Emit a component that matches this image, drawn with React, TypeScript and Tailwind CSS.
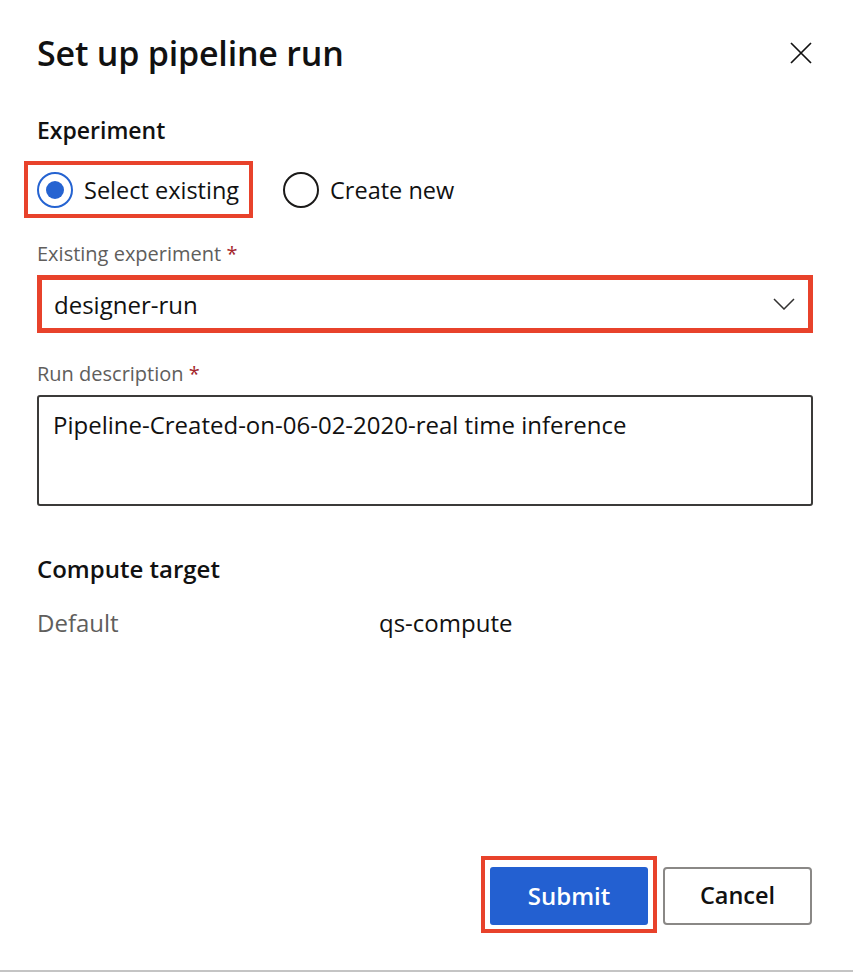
import React from 'react';

const Radio = ({ checked }: { checked?: boolean }) => (
  <span
    className={`flex h-[36px] w-[36px] shrink-0 items-center justify-center rounded-full border-[2px] ${
      checked ? 'border-[#2563d1]' : 'border-[#1b1a19]'
    }`}
  >
    {checked && <span className="h-[18px] w-[18px] rounded-full bg-[#2563d1]" />}
  </span>
);

const App: React.FC = () => {
  return (
    <div className="flex h-[972px] w-[853px] flex-col border-b-2 border-[#c4c4c4] bg-white pl-[37px] pr-[40px] font-['Open_Sans',sans-serif] text-[#111]">
      <header className="mt-[33px] flex h-[40px] items-start justify-between">
        <h1 className="text-[34px] font-semibold leading-[40px] tracking-[-0.2px]">Set up pipeline run</h1>
        <svg className="mt-[9px] mr-[1px]" width="22" height="22" viewBox="0 0 22 22" fill="none" stroke="#111" strokeWidth="1.7">
          <path d="M1 1 L21 21 M21 1 L1 21" />
        </svg>
      </header>

      <h2 className="mt-[42px] text-[23px] font-semibold leading-[30px]">Experiment</h2>

      <div className="mt-[16px] ml-[-13px] flex items-center">
        <div className="flex h-[57px] items-center gap-[11px] border-[4px] border-[#e8422b] pl-[9px] pr-[10px]">
          <Radio checked />
          <span className="text-[23.5px] leading-[30px]">Select existing</span>
        </div>
        <div className="ml-[30px] flex items-center gap-[11px]">
          <Radio />
          <span className="text-[23.5px] leading-[30px]">Create new</span>
        </div>
      </div>

      <label className="mt-[22px] text-[20px] leading-[28px] text-[#605e5c]">
        Existing experiment <span className="text-[#a4262c]">*</span>
      </label>
      <div className="mt-[7px] flex h-[58px] items-center justify-between border-[5px] border-[#e8422b] pl-[12px] pr-[13px]">
        <span className="pt-[2px] text-[24px] leading-[30px]">designer-run</span>
        <svg width="22" height="12" viewBox="0 0 22 12" fill="none" stroke="#323130" strokeWidth="1.5">
          <path d="M1 1 L11 11 L21 1" />
        </svg>
      </div>

      <label className="mt-[27px] text-[20px] leading-[28px] text-[#605e5c]">
        Run description <span className="text-[#a4262c]">*</span>
      </label>
      <div className="mt-[7px] h-[111px] rounded-[3px] border-2 border-[#3b3a39] px-[14px] pt-[13px]">
        <p className="text-[24px] leading-[30px]">Pipeline-Created-on-06-02-2020-real time inference</p>
      </div>

      <h2 className="mt-[48px] text-[24px] font-semibold leading-[30px]">Compute target</h2>
      <div className="mt-[24px] flex text-[24px] leading-[30px]">
        <span className="w-[342px] text-[#605e5c]">Default</span>
        <span>qs-compute</span>
      </div>

      <footer className="mt-auto mb-[37px] flex items-end justify-end gap-[6px] pr-[1px]">
        <div className="border-[4px] border-[#e8422b] px-[5px] pt-[7px] pb-[4px]">
          <button className="h-[58px] w-[158px] rounded-[3px] bg-[#2360d1] text-[24px] font-semibold text-white">
            Submit
          </button>
        </div>
        <button className="mb-[8px] h-[58px] w-[149px] rounded-[4px] border-2 border-[#8a8886] bg-white text-[23.5px] font-semibold text-[#111]">
          Cancel
        </button>
      </footer>
    </div>
  );
};

export default App;
